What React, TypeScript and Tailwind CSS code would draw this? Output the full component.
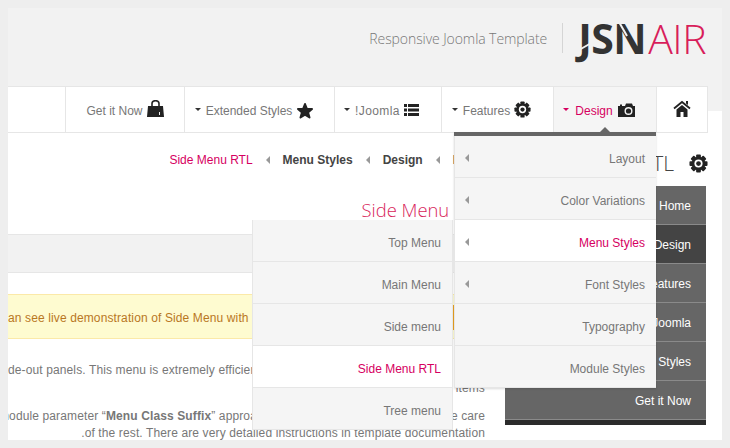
const sans = "font-['Liberation_Sans',Arial,sans-serif]";

function Caret({ pink }: { pink?: boolean }) {
  return (
    <span
      className={`mr-[1px] mt-[-4px] h-0 w-0 border-x-[3px] border-t-[3px] border-x-transparent ${
        pink ? 'border-t-[#d6005f]' : 'border-t-[#333]'
      }`}
    />
  );
}

function LeftArrow({ lift }: { lift?: boolean }) {
  return (
    <span
      className={`h-0 w-0 border-y-[4px] border-r-[4px] border-y-transparent border-r-[#999] ${lift ? 'mt-[-2px]' : ''}`}
    />
  );
}

function Bag() {
  return (
    <svg viewBox="0 0 17 17" className="mt-[-5px] h-[17px] w-[17px] fill-[#222]">
      <path d="M1 6h15l1 11H0z" />
      <path d="M5 7V3.500C5 1.800 6.500.7 8.500.7S12 1.800 12 3.500V7" fill="none" stroke="#222" strokeWidth="1.6" />
      <rect x="12" y="12" width="1" height="3" fill="#eee" />
    </svg>
  );
}

function Star() {
  return (
    <svg viewBox="0 0 18 18" className="mt-[-1px] h-[18px] w-[18px] fill-[#222] stroke-[#222]">
      <path strokeWidth="2" strokeLinejoin="round" d="M9 2l2 5h5l-4 3.400 1.500 5.100L9 12.600 4.500 15.500 6 10.400 2 7h5z" />
    </svg>
  );
}

function ListIcon() {
  return (
    <svg viewBox="0 0 15 12" className="mt-[-3px] h-[12px] w-[15px] fill-[#222]">
      <rect x="0" y="0" width="3" height="3" />
      <rect x="4" y="0" width="11" height="3" />
      <rect x="0" y="4.500" width="3" height="3" />
      <rect x="4" y="4.500" width="11" height="3" />
      <rect x="0" y="9" width="3" height="3" />
      <rect x="4" y="9" width="11" height="3" />
    </svg>
  );
}

function Gear({ className }: { className: string }) {
  return (
    <svg viewBox="0 0 20 20" className={className}>
      {[0, 45, 90, 135].map((a) => (
        <rect key={a} x="7.500" y="0.500" width="5" height="19" rx="1" fill="#222" transform={`rotate(${a} 10 10)`} />
      ))}
      <circle cx="10" cy="10" r="7" fill="#222" />
      <circle cx="10" cy="10" r="4.300" fill="#fff" />
      <circle cx="10" cy="10" r="2.500" fill="#222" />
    </svg>
  );
}

function CameraIcon() {
  return (
    <svg viewBox="0 0 17 14" className="mt-[-3px] h-[14px] w-[17px]">
      <path d="M0 3h2V1.500h2V3h3l1-2.500h6L15 3h2v11H0z" fill="#222" />
      <circle cx="10.500" cy="8" r="4" fill="#f5f5f5" />
      <circle cx="10.500" cy="8" r="2.600" fill="#222" />
    </svg>
  );
}

function HomeIcon() {
  return (
    <svg viewBox="0 0 18 17" className="mt-[-3px] h-[17px] w-[18px]">
      <path d="M1 8.500L9 2l8 6.500" fill="none" stroke="#222" strokeWidth="1.800" />
      <path d="M13 1h2v4l-2-1.500z" fill="#222" />
      <path d="M3.500 9.500L9 5l5.500 4.500V17h-4v-5h-3v5h-4z" fill="#222" />
    </svg>
  );
}

const navItems = [
  { label: 'Get it Now', icon: <Bag />, w: 'w-[119px]', caret: false },
  { label: 'Extended Styles', icon: <Star />, w: 'w-[150px] pr-[10px]', caret: true },
  { label: '!Joomla', icon: <ListIcon />, w: 'w-[107px] pr-[13px] tracking-[0.4px]', caret: true },
  { label: 'Features', icon: <Gear className="mt-[-3px] h-[17px] w-[17px]" />, w: 'w-[112px] pr-[12px]', caret: true },
];

const designMenu = [
  { label: 'Layout', arrow: true },
  { label: 'Color Variations', arrow: true },
  { label: 'Menu Styles', arrow: true, active: true },
  { label: 'Font Styles', arrow: true },
  { label: 'Typography' },
  { label: 'Module Styles' },
];

const styleMenu = [
  { label: 'Top Menu' },
  { label: 'Main Menu' },
  { label: 'Side menu' },
  { label: 'Side Menu RTL', active: true },
  { label: 'Tree menu' },
];

const sideItems = ['Home', 'Design', 'Features', '!Joomla', 'Extended Styles', 'Get it Now'];

function DropRow({ label, arrow, active }: { label: string; arrow?: boolean; active?: boolean }) {
  return (
    <div
      className={`flex h-[42px] items-center justify-between border-b border-[#e6e6e6] pl-[10px] pr-[11px] pt-[4px] ${
        active ? 'bg-white text-[#d6005f]' : 'bg-[#f5f5f5] text-[#777]'
      }`}
    >
      {arrow ? <LeftArrow lift /> : <span />}
      <span>{label}</span>
    </div>
  );
}

export default function App() {
  return (
    <div className={`relative h-[448px] w-[730px] overflow-hidden bg-[#eeeeee] p-2 text-[12px] text-[#777] ${sans}`}>
      <div className="flex h-[432px] w-[714px] flex-col overflow-hidden">
        <header className="flex h-[78px] shrink-0 items-center justify-end bg-[#f2f2f2] pr-[16px]">
          <span className="mr-[15px] mt-[-18px] font-['Open_Sans',sans-serif] text-[14px] font-light tracking-[-0.08px] text-[#777]">
            Responsive Joomla Template
          </span>
          <span className="mr-[15px] mt-[-18px] h-[30px] w-px bg-[#d5d5d5]" />
          <span className="relative mt-[-18px] flex items-baseline font-['Open_Sans',sans-serif] text-[41px] leading-none tracking-[-0.5px]">
            <span className="font-bold text-[#333]">JSN</span>
            <span className="ml-[2px] font-light text-[#d81e5b]">AIR</span>
            {/* slashes through the logo letters */}
            <span className="absolute left-[2px] top-[27px] h-[2px] w-[12px] -rotate-[30deg] bg-[#f2f2f2]" />
            <span className="absolute left-[44px] top-[3px] h-[16px] w-[2px] -rotate-[30deg] bg-[#f2f2f2]" />
          </span>
        </header>

        <div className="flex h-[47px] shrink-0">
          <nav className="flex w-[700px] justify-end border-y border-[#e6e6e6] bg-white">
            {navItems.map((item) => (
              <div
                key={item.label}
                className={`${item.w} flex items-center justify-center gap-[4px] border-l border-[#e6e6e6] pt-[3px]`}
              >
                {item.caret && <Caret />}
                <span>{item.label}</span>
                {item.icon}
              </div>
            ))}
            <div className="flex w-[103px] items-center justify-center gap-[5px] border-l border-[#e6e6e6] bg-[#f5f5f5] pr-[12px] pt-[3px] text-[#d6005f]">
              <Caret pink />
              <span>Design</span>
              <CameraIcon />
            </div>
            <div className="flex w-[52px] items-center justify-center border-x border-[#e6e6e6]">
              <HomeIcon />
            </div>
          </nav>
          <div className="flex-1">
            <div className="h-[25px] bg-[#f2f2f2]" />
            <div className="h-[22px] bg-white" />
          </div>
        </div>

        <div className="flex flex-1 overflow-hidden bg-white">
          <main className="w-[497px] shrink-0 overflow-hidden tracking-[0.12px]">
            <div className="flex h-[54px] items-center justify-end gap-[13px] pr-[19px] tracking-normal">
              <span className="text-[#d6005f]">Side Menu RTL</span>
              <LeftArrow />
              <span className="font-bold text-[#444]">Menu Styles</span>
              <LeftArrow />
              <span className="font-bold text-[#444]">Design</span>
              <LeftArrow />
              <span className="font-bold text-[#444]">Home</span>
            </div>
            <div className="flex h-[47px] items-center justify-end pb-[2px] pr-[21px] font-['Open_Sans',sans-serif] text-[18.4px] font-light tracking-normal text-[#d81e5b]">
              Side Menu RTL
            </div>
            <div className="h-[39px] border-y border-[#e6e6e6] bg-[#f2f2f2]" />
            <div className="relative mt-[21px] flex h-[45px] items-center overflow-hidden whitespace-nowrap border-y border-[#fbe9a8] bg-[#fefbd0] pt-[2px] text-[#b9771f]">
              an see live demonstration of Side Menu with
              <span className="absolute left-[445px] top-[10px] h-[25px] w-px bg-[#e8a020]" />
            </div>
            <div className="flex h-[40px] items-end whitespace-nowrap leading-[18px]">de-out panels. This menu is extremely efficient</div>
            <div className="flex h-[18px] items-center justify-end pr-[20px]">items</div>
            <div className="mt-[10px] flex h-[17px] items-center justify-between whitespace-nowrap pr-[20px]">
              <span className="ml-[-9px]">
                module parameter “<b>Menu Class Suffix</b>” approach
              </span>
              <span>e care</span>
            </div>
            <div className="flex h-[17px] items-center justify-end whitespace-nowrap pr-[20px]">
              .of the rest. There are very detailed instructions in template documentation
            </div>
          </main>
          <aside className="w-[201px] shrink-0">
            <div className="flex h-[53px] items-center justify-end gap-[15px] pt-[7px] font-['Open_Sans',sans-serif] text-[21px] font-light text-[#444]">
              <span className="mt-[2px] whitespace-nowrap">Side Menu RTL</span>
              <Gear className="mr-[-2px] h-[19px] w-[19px]" />
            </div>
            {sideItems.map((label) => (
              <div
                key={label}
                className={`flex h-[39px] items-center justify-end whitespace-nowrap border-b border-[#8a8a8a] pr-[15px] pt-[1px] text-white ${
                  label === 'Design' ? 'bg-[#444]' : 'bg-[#666]'
                }`}
              >
                {label}
              </div>
            ))}
            <div className="h-[5px] bg-[#2b2b2b]" />
          </aside>
        </div>
      </div>

      {/* first level dropdown */}
      <div className="absolute left-[454px] top-[132px] w-[202px] border-t-[4px] border-[#666] shadow-[0_1px_2px_rgba(0,0,0,0.15)]">
        <span className="absolute left-[146px] top-[-9px] h-0 w-0 border-x-[5px] border-b-[5px] border-x-transparent border-b-[#666]" />
        <div className="border-l border-[#e6e6e6]">
          {designMenu.map((item) => (
            <DropRow key={item.label} {...item} />
          ))}
        </div>
      </div>

      {/* second level dropdown */}
      <div className="absolute left-[252px] top-[220px] w-[201px] border-x border-[#e6e6e6]">
        {styleMenu.map((item) => (
          <DropRow key={item.label} {...item} />
        ))}
      </div>
    </div>
  );
}
